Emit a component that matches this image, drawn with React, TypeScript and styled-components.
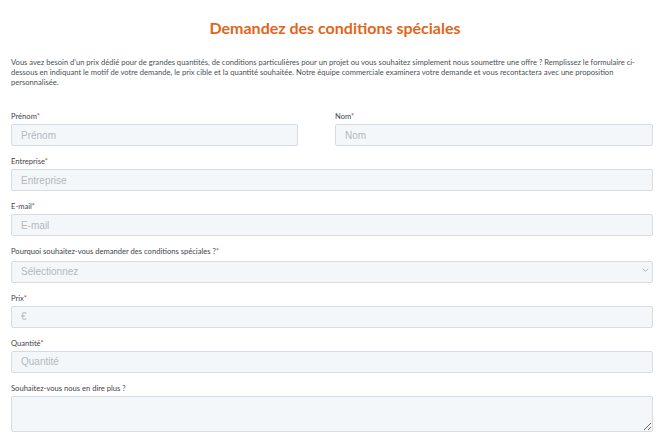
import styled, { createGlobalStyle } from "styled-components";

const GlobalStyle = createGlobalStyle`
  body {
    margin: 0;
    background: #ffffff;
    font-family: "Lato", "Noto Sans", sans-serif;
  }
`;

const Page = styled.main`
  padding: 18px 17px 0 11px;
`;

const Title = styled.h1`
  margin: 0 0 19px;
  text-align: center;
  font-size: 16px;
  line-height: 20px;
  font-weight: 700;
  color: #e0661c;
  margin-left: 6px;
`;

const Intro = styled.p`
  margin: 0 0 24px;
  font-size: 7.6px;
  line-height: 10px;
  color: #4a4f57;
`;

const Form = styled.form`
  display: flex;
  flex-direction: column;
  gap: 10px;
`;

const Row = styled.div`
  display: grid;
  grid-template-columns: 287px 1fr;
  column-gap: 37px;
`;

const Field = styled.div`
  display: flex;
  flex-direction: column;
`;

const Label = styled.label`
  font-size: 7.6px;
  line-height: 11px;
  color: #3f444c;
  margin-bottom: 2px;
`;

const Star = styled.span`
  color: #e0452b;
`;

const controlBase = `
  box-sizing: border-box;
  width: 100%;
  background: #f4f7fa;
  border: 1px solid #d6dce4;
  border-radius: 2px;
  font-family: "Liberation Sans", Arial, sans-serif;
  font-size: 10px;
  color: #333;
  outline: none;
  &::placeholder {
    color: #b3b8be;
  }
`;

const Input = styled.input`
  ${controlBase}
  height: 22px;
  padding: 0 9px;
`;

const SelectWrap = styled.div`
  position: relative;
`;

const Select = styled.select`
  ${controlBase}
  height: 22px;
  padding: 0 9px;
  appearance: none;
  color: #b3b8be;
`;

const Chevron = styled.svg`
  position: absolute;
  right: 4px;
  top: 8px;
  width: 7px;
  height: 6px;
  pointer-events: none;
`;

const TextArea = styled.textarea`
  ${controlBase}
  height: 36px;
  padding: 5px 9px;
  display: block;
`;

function Req({ children }: { children: string }) {
  return (
    <Label>
      {children}
      <Star>*</Star>
    </Label>
  );
}

export default function App() {
  return (
    <>
      <GlobalStyle />
      <Page>
        <Title>Demandez des conditions spéciales</Title>
        <Intro>
          Vous avez besoin d'un prix dédié pour de grandes quantités, de conditions particulières pour un
          projet ou vous souhaitez simplement nous soumettre une offre ? Remplissez le formulaire
          ci-dessous en indiquant le motif de votre demande, le prix cible et la quantité souhaitée. Notre
          équipe commerciale examinera votre demande et vous recontactera avec une proposition
          personnalisée.
        </Intro>
        <Form>
          <Row>
            <Field>
              <Req>Prénom</Req>
              <Input placeholder="Prénom" />
            </Field>
            <Field>
              <Req>Nom</Req>
              <Input placeholder="Nom" />
            </Field>
          </Row>
          <Field>
            <Req>Entreprise</Req>
            <Input placeholder="Entreprise" />
          </Field>
          <Field>
            <Req>E-mail</Req>
            <Input placeholder="E-mail" />
          </Field>
          <Field>
            <Req>Pourquoi souhaitez-vous demander des conditions spéciales ?</Req>
            <SelectWrap>
              <Select defaultValue="">
                <option value="" disabled>
                  Sélectionnez
                </option>
              </Select>
              <Chevron viewBox="0 0 8 6">
                <path d="M1 1.5 L4 4.5 L7 1.5" fill="none" stroke="#a9aeb4" strokeWidth="1.1" />
              </Chevron>
            </SelectWrap>
          </Field>
          <Field>
            <Req>Prix</Req>
            <Input placeholder="€" />
          </Field>
          <Field>
            <Req>Quantité</Req>
            <Input placeholder="Quantité" />
          </Field>
          <Field>
            <Label>Souhaitez-vous nous en dire plus ?</Label>
            <TextArea />
          </Field>
        </Form>
      </Page>
    </>
  );
}
